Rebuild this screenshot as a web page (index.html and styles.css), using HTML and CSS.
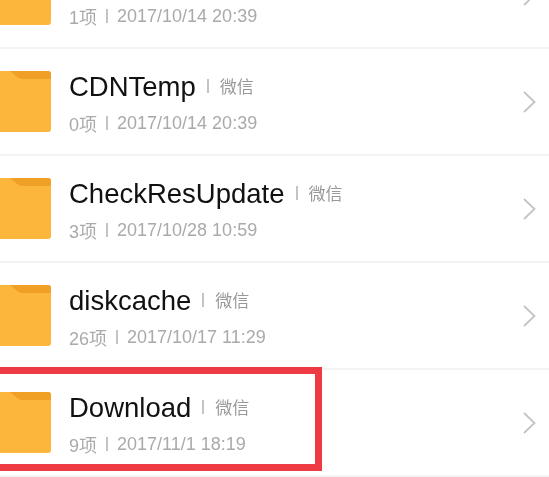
FILE: index.html
```html
<!DOCTYPE html>
<html lang="zh-CN">
<head>
  <meta charset="UTF-8">
  <title>文件管理</title>
  <link rel="stylesheet" href="styles.css">
</head>
<body>

  <svg class="icon-defs" width="0" height="0">
    <symbol id="folder" viewBox="0 0 51 61">
      <path d="M-6 0H48a3 3 0 0 1 3 3V58a3 3 0 0 1-3 3H-6Z" fill="#fdb63c"/>
      <path d="M10 0H48a3 3 0 0 1 3 3V8H22Q19 8 16 5Z" fill="#f0a024"/>
    </symbol>
    <symbol id="chevron" viewBox="0 0 13 22">
      <path d="M1 1L11.500 11L1 21" fill="none" stroke="#c4c4c4" stroke-width="1.800"/>
    </symbol>
  </svg>

  <div class="file-list">

    <!-- top row is scrolled off, only its second line shows -->
    <div class="file-row">
      <svg class="folder-icon"><use href="#folder"/></svg>
      <div class="file-info">
        <div class="file-title"></div>
        <div class="file-meta"><span>1项</span><i class="sep"></i><span>2017/10/14 20:39</span></div>
      </div>
      <svg class="chevron-icon"><use href="#chevron"/></svg>
    </div>

    <div class="file-row">
      <svg class="folder-icon"><use href="#folder"/></svg>
      <div class="file-info">
        <div class="file-title"><span class="file-name">CDNTemp</span><i class="sep"></i><span class="file-source">微信</span></div>
        <div class="file-meta"><span>0项</span><i class="sep"></i><span>2017/10/14 20:39</span></div>
      </div>
      <svg class="chevron-icon"><use href="#chevron"/></svg>
    </div>

    <div class="file-row">
      <svg class="folder-icon"><use href="#folder"/></svg>
      <div class="file-info">
        <div class="file-title"><span class="file-name">CheckResUpdate</span><i class="sep"></i><span class="file-source">微信</span></div>
        <div class="file-meta"><span>3项</span><i class="sep"></i><span>2017/10/28 10:59</span></div>
      </div>
      <svg class="chevron-icon"><use href="#chevron"/></svg>
    </div>

    <div class="file-row">
      <svg class="folder-icon"><use href="#folder"/></svg>
      <div class="file-info">
        <div class="file-title"><span class="file-name">diskcache</span><i class="sep"></i><span class="file-source">微信</span></div>
        <div class="file-meta"><span>26项</span><i class="sep"></i><span>2017/10/17 11:29</span></div>
      </div>
      <svg class="chevron-icon"><use href="#chevron"/></svg>
    </div>

    <div class="file-row">
      <svg class="folder-icon"><use href="#folder"/></svg>
      <div class="file-info">
        <div class="file-title"><span class="file-name">Download</span><i class="sep"></i><span class="file-source">微信</span></div>
        <div class="file-meta"><span>9项</span><i class="sep"></i><span>2017/11/1 18:19</span></div>
      </div>
      <svg class="chevron-icon"><use href="#chevron"/></svg>
    </div>

  </div>

  <div class="highlight-box"></div>

</body>
</html>
```

FILE: styles.css
```css
html, body {
  margin: 0;
  height: 100%;
  overflow: hidden;
  background: #fff;
}

body {
  position: relative;
  font-family: "Liberation Sans", "Noto Sans CJK SC", sans-serif;
}

.icon-defs {
  position: absolute;
}

.file-list {
  margin-top: -58px;
}

.file-row {
  display: flex;
  align-items: center;
  height: 105px;
  border-bottom: 2px solid #f3f3f3;
}

.folder-icon {
  flex: none;
  width: 51px;
  height: 61px;
}

.file-info {
  flex: 1;
  margin-left: 18px;
  padding-top: 5px;
  filter: blur(0.4px);
}

.file-title {
  display: flex;
  align-items: center;
  height: 34px;
  margin-bottom: 4px;
}

.file-name {
  font-size: 27.500px;
  color: #111;
}

.file-source {
  margin-bottom: 4px;
  font-size: 17px;
  color: #999;
}

.file-meta {
  display: flex;
  align-items: center;
  height: 30px;
  font-size: 18px;
  color: #aaa;
}

.sep {
  width: 2px;
  height: 14px;
  margin: 0 9px;
  background: #c4c4c4;
}

.file-title .sep {
  margin: 0 11px 2px;
}

.chevron-icon {
  flex: none;
  width: 13px;
  height: 22px;
  margin-right: 13px;
}

.highlight-box {
  position: absolute;
  left: -8px;
  top: 367px;
  width: 316px;
  height: 90px;
  border: 7px solid #ee3a43;
}
```
